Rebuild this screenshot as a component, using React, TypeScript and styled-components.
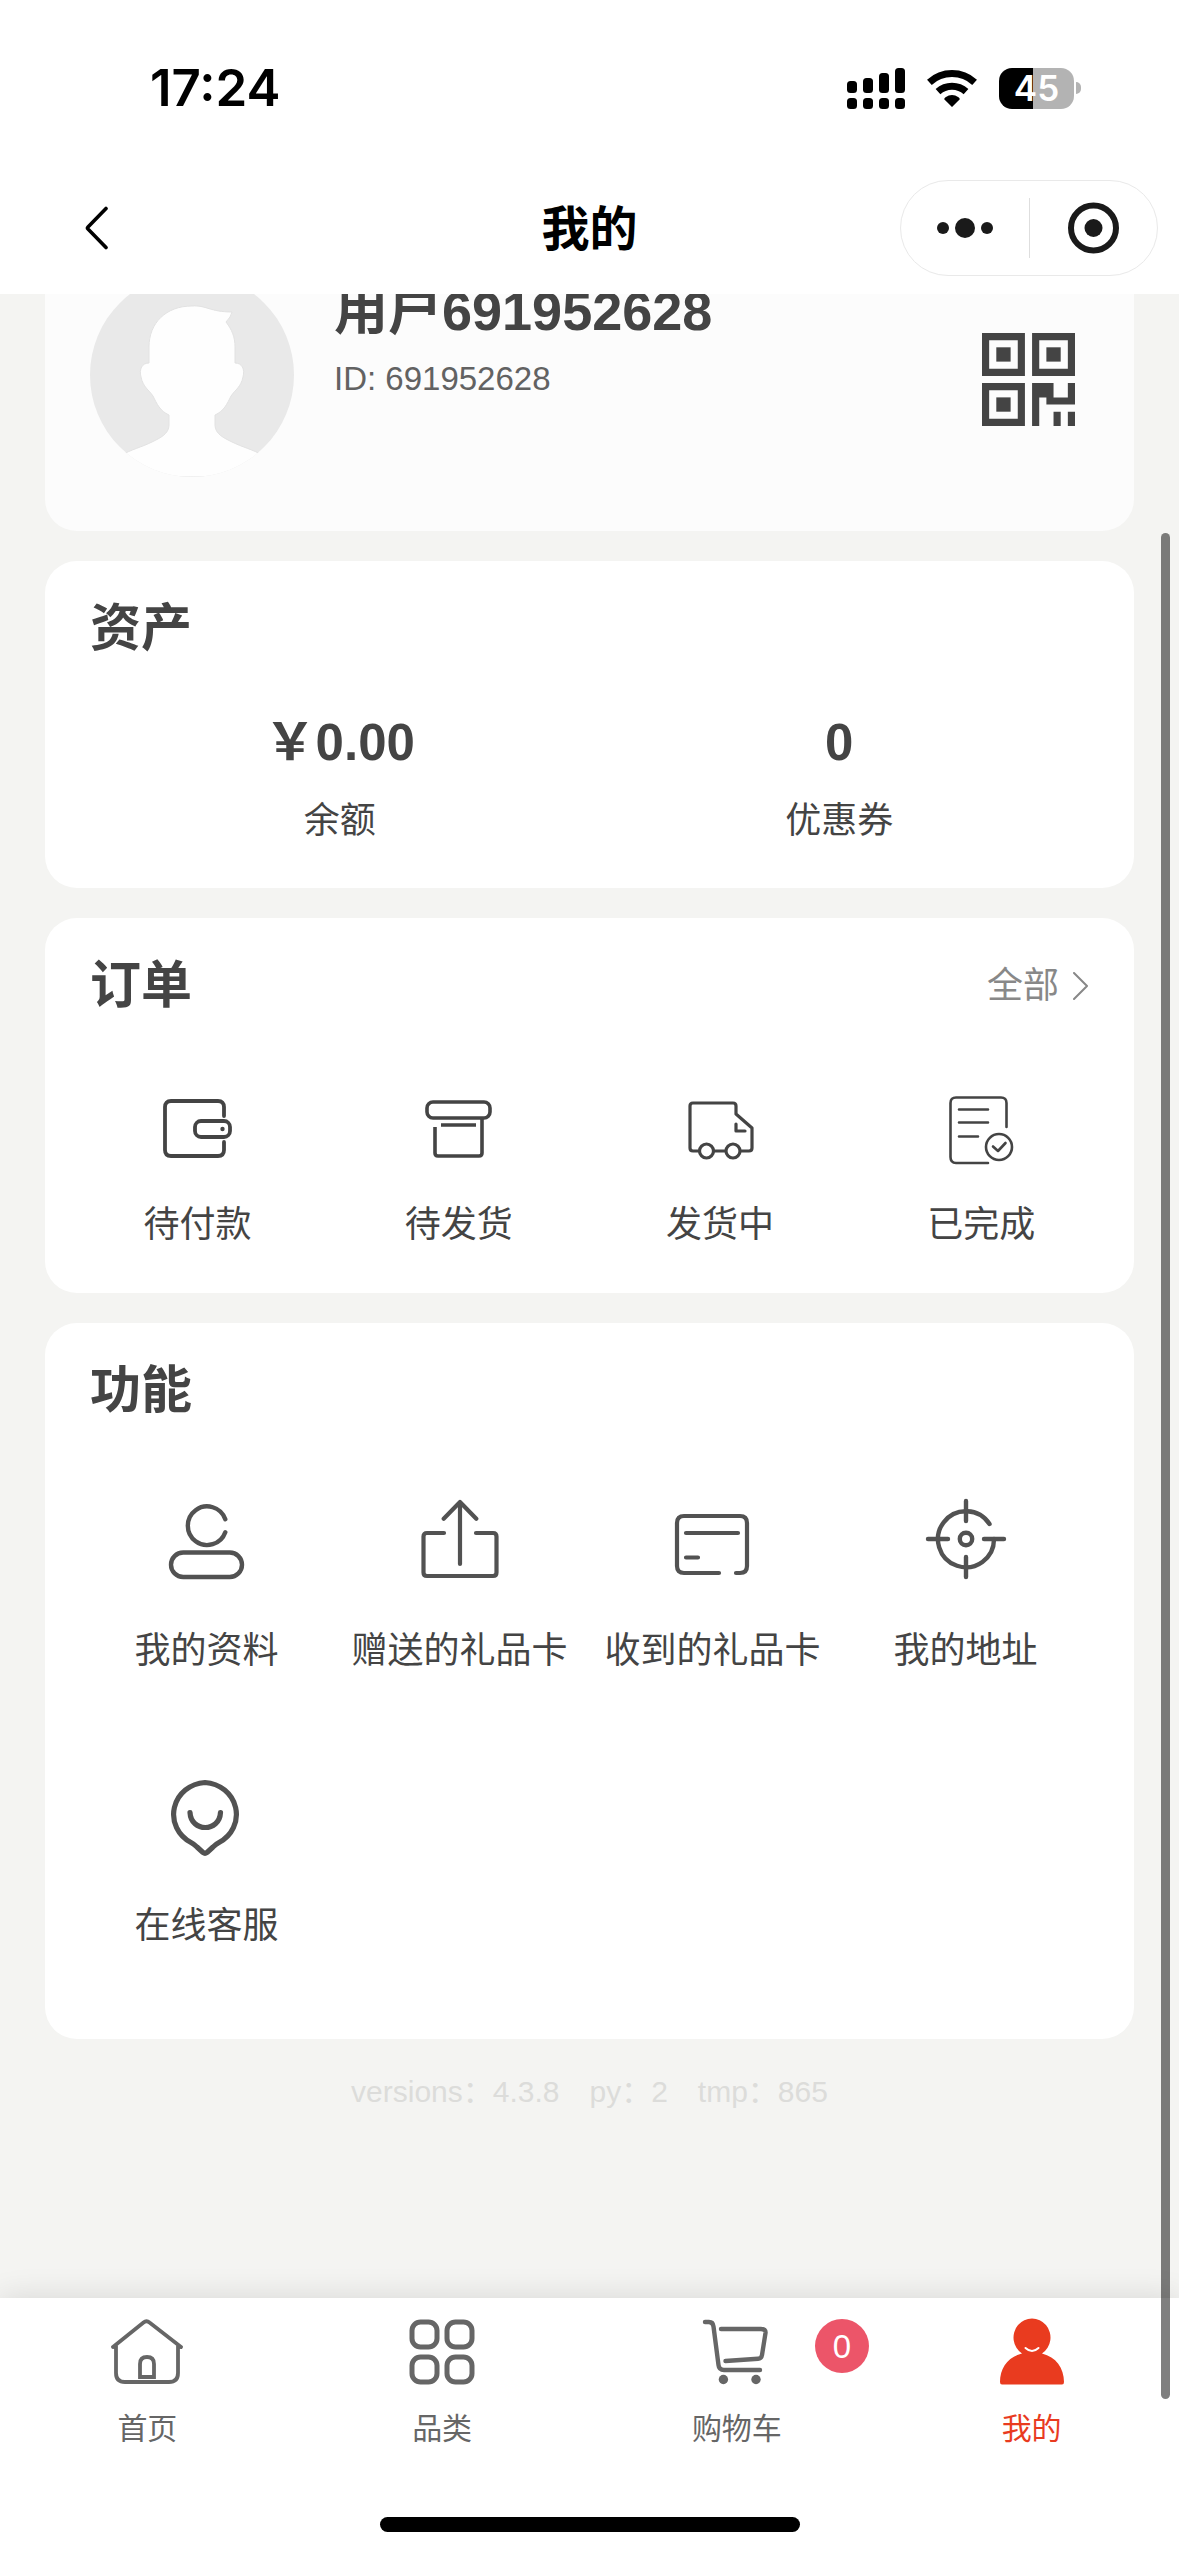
import React from "react";
import styled, { createGlobalStyle } from "styled-components";

const GlobalStyle = createGlobalStyle`
  *, *::before, *::after { box-sizing: border-box; }
  body {
    margin: 0;
    background: #f4f4f2;
    color: #444;
    font-family: "Liberation Sans", "Noto Sans CJK SC", sans-serif;
  }
  h1, h2, p { margin: 0; }
  button {
    margin: 0;
    padding: 0;
    border: 0;
    background: none;
    color: inherit;
    font: inherit;
    cursor: pointer;
  }
  a { color: inherit; text-decoration: none; }
  svg { display: block; flex: none; }
`;

const Screen = styled.div`
  display: flex;
  flex-direction: column;
  min-height: 100vh;
`;

const Header = styled.header`
  background: #fff;
  color: #000;
`;

const StatusBar = styled.div`
  display: flex;
  align-items: center;
  justify-content: space-between;
  height: 162px;
  padding: 14px 98px 0 150px;
`;

const Clock = styled.time`
  font: 600 51px/60px Inter, sans-serif;
`;

const StatusIcons = styled.div`
  display: flex;
  align-items: center;
  gap: 22px;
`;

const Battery = styled.div`
  display: flex;
  align-items: center;
  gap: 2px;
`;

const BatteryBody = styled.span<{ $level: number }>`
  width: 75px;
  height: 41px;
  border-radius: 13px;
  background: linear-gradient(to right, #000 ${(p) => p.$level}%, #b3b3b3 ${(p) => p.$level}%);
  color: #fff;
  font: 600 35px/41px Inter, sans-serif;
  text-align: center;
`;

const BatteryTip = styled.span`
  width: 5px;
  height: 12px;
  border-radius: 0 6px 6px 0;
  background: #b3b3b3;
`;

const NavBar = styled.div`
  display: grid;
  grid-template-columns: 1fr auto 1fr;
  align-items: center;
  height: 132px;
  padding: 0 21px;
`;

const BackButton = styled.button`
  justify-self: start;
  padding: 24px 40px 24px 62px;
`;

const PageTitle = styled.h1`
  padding-top: 4px;
  font-size: 48px;
  line-height: 60px;
  font-weight: 700;
`;

const Capsule = styled.div`
  justify-self: end;
  display: grid;
  grid-template-columns: 1fr 1px 1fr;
  align-items: center;
  width: 258px;
  height: 96px;
  border: 1px solid #e9e9e9;
  border-radius: 48px;
`;

const CapsuleButton = styled.button`
  display: grid;
  place-items: center;
  height: 94px;
`;

const CapsuleDivider = styled.span`
  height: 60px;
  background: #dedede;
`;

const Main = styled.main`
  flex: 1;
  overflow: hidden;
`;

/* The list is scrolled up a little, so the profile card slides under the header. */
const ScrolledContent = styled.div`
  display: flex;
  flex-direction: column;
  gap: 30px;
  margin-top: -74px;
  padding: 0 45px 32px;
`;

const Card = styled.section<{ $bottom: number }>`
  padding: 38px 0 ${(p) => p.$bottom}px;
  border-radius: 32px;
  background: #fff;
`;

const ProfileCard = styled.section`
  display: flex;
  align-items: flex-start;
  padding: 53px 59px 54px 45px;
  border-radius: 32px;
  background: #fcfcfc;
`;

const Avatar = styled.svg`
  width: 204px;
  height: 204px;
  border-radius: 50%;
  background: #e9e9e9;
`;

const ProfileInfo = styled.div`
  flex: 1;
  display: flex;
  flex-direction: column;
  gap: 16px;
  padding: 6px 0 0 40px;
`;

const UserName = styled.p`
  font-size: 54px;
  line-height: 64px;
  font-weight: 700;
`;

const UserId = styled.p`
  color: #626262;
  font-size: 33px;
  line-height: 40px;
`;

const QrButton = styled.button`
  margin-top: 60px;
`;

const CardHead = styled.div`
  display: flex;
  align-items: center;
  justify-content: space-between;
  padding: 0 45px;
`;

const CardTitle = styled.h2`
  font-size: 51px;
  line-height: 60px;
  font-weight: 700;
`;

const MoreLink = styled.a`
  display: flex;
  align-items: center;
  gap: 14px;
  color: #888;
  font-size: 36px;
  line-height: 56px;
`;

const AssetRow = styled.div`
  display: grid;
  grid-template-columns: 1fr 1fr;
  padding: 54px 45px 0;
`;

const Asset = styled.a`
  display: flex;
  flex-direction: column;
  align-items: center;
  gap: 23px;
`;

const AssetValue = styled.strong`
  font-size: 51px;
  line-height: 60px;
`;

const Label = styled.span`
  font-size: 36px;
  line-height: 50px;
  white-space: nowrap;
`;

const OrderGrid = styled.div`
  display: grid;
  grid-template-columns: repeat(4, 1fr);
  padding: 78px 22px 0;
`;

const FeatureGrid = styled.div`
  display: grid;
  grid-template-columns: repeat(4, 1fr);
  row-gap: 96px;
  padding: 76px 42px 0 35px;
`;

const Entry = styled.a<{ $gap: number }>`
  display: flex;
  flex-direction: column;
  align-items: center;
  gap: ${(p) => p.$gap}px;
`;

const LineIcon = styled.svg<{ $size: number; $color: string; $stroke: number }>`
  width: ${(p) => p.$size}px;
  height: ${(p) => p.$size}px;
  fill: none;
  stroke: ${(p) => p.$color};
  stroke-width: ${(p) => p.$stroke};
  stroke-linecap: round;
  stroke-linejoin: round;
`;

const Version = styled.p`
  display: flex;
  justify-content: center;
  gap: 30px;
  padding-top: 2px;
  color: #dcdcda;
  font-size: 30px;
  line-height: 42px;
`;

const TabBar = styled.nav`
  background: #fff;
  box-shadow: 0 0 30px rgba(0, 0, 0, 0.12);
`;

const Tabs = styled.div`
  display: grid;
  grid-template-columns: repeat(4, 1fr);
  padding-top: 18px;
`;

const Tab = styled.a<{ $active?: boolean }>`
  position: relative;
  display: flex;
  flex-direction: column;
  align-items: center;
  gap: 21px;
  color: ${(p) => (p.$active ? "#e93b1f" : "#666")};
  font-size: 30px;
  line-height: 40px;
`;

const Badge = styled.span`
  position: absolute;
  top: 3px;
  left: calc(50% + 78px);
  width: 54px;
  height: 54px;
  border-radius: 50%;
  background: #ec5569;
  color: #fff;
  font-size: 33px;
  line-height: 56px;
  text-align: center;
`;

const HomeIndicator = styled.div`
  width: 420px;
  height: 15px;
  margin: 68px auto 0;
  border-radius: 8px;
  background: #000;
`;

const TabBarFoot = styled.div`
  height: 24px;
`;

const ScrollThumb = styled.div`
  position: fixed;
  top: 533px;
  right: 9px;
  bottom: 157px;
  width: 9px;
  border-radius: 5px;
  background: rgba(0, 0, 0, 0.5);
`;

const SignalIcon = () => (
  <svg width="58" height="41" viewBox="0 0 58 41" aria-hidden="true">
    <rect x="0" y="13" width="10" height="12" rx="3.5" />
    <rect x="16" y="10" width="10" height="15" rx="3.5" />
    <rect x="32" y="5" width="10" height="20" rx="3.5" />
    <rect x="48" y="0" width="10" height="25" rx="3.5" />
    {[0, 16, 32, 48].map((x) => (
      <rect key={x} x={x} y="30" width="10" height="11" rx="3.5" />
    ))}
  </svg>
);

const WifiIcon = () => (
  <svg width="50" height="41" viewBox="0 0 50 41" aria-hidden="true">
    <path d="M2.4 14.3A33.5 33.5 0 0 1 47.6 14.3" fill="none" stroke="#000" strokeWidth="7" />
    <path d="M11 23.7A20.7 20.7 0 0 1 39 23.7" fill="none" stroke="#000" strokeWidth="7" />
    <path d="M25 39L17.2 31.2Q17.2 30 18.5 29.2A12 12 0 0 1 31.5 29.2Q32.8 30 32.8 31.2Z" />
  </svg>
);

const QrIcon = () => (
  <svg width="93" height="93" viewBox="0 0 13 13" fill="#444" aria-hidden="true">
    {[[0, 0], [7, 0], [0, 7]].map(([x, y]) => (
      <React.Fragment key={`${x}-${y}`}>
        <path fillRule="evenodd" d={`M${x} ${y}h6v6h-6zM${x + 1} ${y + 1}v4h4v-4z`} />
        <rect x={x + 2} y={y + 2} width="2" height="2" />
      </React.Fragment>
    ))}
    <path d="M7 7h3v2h2v-2h1v3h-4v-1h-1v4h-1z" />
    <path d="M10 11h1v2h-1zM12 11h1v2h-1z" />
  </svg>
);

const orders = [
  {
    label: "待付款",
    stroke: 3.8,
    icon: (
      <>
        <path d="M62 22V13Q62 7 56 7H9Q3 7 3 13V56Q3 62 9 62H56Q62 62 62 56V48" />
        <rect x="33" y="27" width="35" height="16" rx="6" />
        <circle cx="60.5" cy="35" r="2.2" fill="#444" stroke="none" />
      </>
    ),
  },
  {
    label: "待发货",
    stroke: 3.6,
    icon: (
      <>
        <rect x="4" y="8" width="63" height="16" rx="6" />
        <path d="M12 33V59Q12 62 15 62H56Q59 62 59 59V25M18 31H53" strokeLinecap="butt" />
      </>
    ),
  },
  {
    label: "发货中",
    stroke: 3.2,
    icon: (
      <>
        <path d="M15 57H9Q6 57 6 54V12Q6 9 9 9H49Q52 9 52 12V20L68 34V54Q68 57 65 57H57M30 57H41" />
        <circle cx="22.5" cy="57" r="7" />
        <circle cx="49" cy="57" r="7" />
        <path d="M52 30V37H61" />
      </>
    ),
  },
  {
    label: "已完成",
    stroke: 2.6,
    icon: (
      <>
        <path d="M61.5 33V9Q61.5 3.5 56 3.5H11Q5.5 3.5 5.5 9V63Q5.5 69 11 69H43" />
        <path d="M14 15.5H43M14 28.5H43M14 42.5H33" />
        <circle cx="54" cy="53" r="13" />
        <path d="M48 52.5L53 57L60.5 49" />
      </>
    ),
  },
];

const features = [
  {
    label: "我的资料",
    stroke: 4.4,
    icon: (
      <>
        <path d="M60.3 22.2A19.3 19.3 0 1 0 60.3 35.2" />
        <rect x="6" y="55.5" width="71" height="24.5" rx="12.2" />
      </>
    ),
  },
  {
    label: "赠送的礼品卡",
    stroke: 4.2,
    icon: (
      <>
        <path d="M26 36H9Q5.5 36 5.5 39.5V75.5Q5.5 79 9 79H75Q78.5 79 78.5 75.5V39.5Q78.5 36 75 36H58" />
        <path d="M42 67V5M25.7 21.7L42 5L58.3 21.7" />
      </>
    ),
  },
  {
    label: "收到的礼品卡",
    stroke: 4.2,
    icon: (
      <>
        <path d="M48 76H13Q6 76 6 69V26Q6 19 13 19H69Q76 19 76 26V69Q76 76 69 76H65" />
        <path d="M15 36H67M15 60.5H27" />
      </>
    ),
  },
  {
    label: "我的地址",
    stroke: 4.4,
    icon: (
      <>
        <path d="M65.5 27A28 28 0 1 0 70 42" />
        <circle cx="42" cy="42" r="6.2" />
        <path d="M4 42H24M60 42H80M42 4V24M42 60V80" />
      </>
    ),
  },
  {
    label: "在线客服",
    stroke: 5.2,
    icon: (
      <>
        <path d="M40 10.5A33.5 32 0 0 1 54 70.5Q51 72 48 75L42 80.5Q40 82 38 80.5L32 75Q29 72 26 70.5A33.5 32 0 0 1 40 10.5Z" />
        <path d="M25 40.5C26 60.5 54.500 60.5 55.5 40.5" />
      </>
    ),
  },
];

const tabs = [
  {
    label: "首页",
    stroke: 3.8,
    icon: (
      <>
        <path d="M2 31L32.5 6.5Q35.5 4 38.5 6.5L70 31M5 30V57Q5 66 14 66H58Q67 66 67 57V30" />
        <path d="M29 61V48Q29 41 36 41Q43 41 43 48V61Z" strokeLinejoin="miter" />
      </>
    ),
  },
  {
    label: "品类",
    stroke: 5,
    icon: (
      <>
        {[[6, 6], [41, 6], [6, 41], [41, 41]].map(([x, y]) => (
          <rect key={`${x}-${y}`} x={x} y={y} width="25" height="25" rx="8.5" />
        ))}
      </>
    ),
  },
  {
    label: "购物车",
    stroke: 4.4,
    badge: 0,
    icon: (
      <>
        <path d="M4 6H8Q12 6 12.5 10.5L17.5 49Q18 54 23 54H59" />
        <path d="M20 13H60Q65 13 64.5 17L61 39Q60.5 42.5 57 42.8L24.5 45" />
        <circle cx="22.4" cy="63.5" r="4.7" fill="#666" stroke="none" />
        <circle cx="55" cy="63.5" r="4.7" fill="#666" stroke="none" />
      </>
    ),
  },
  {
    label: "我的",
    stroke: 2,
    active: true,
    icon: (
      <>
        <path
          d="M26 37.5A18.5 19 0 1 1 46 37.5C60 41 68 52 68 66Q68 68.5 66 68.5H6Q4 68.5 4 66C4 52 12 41 26 37.5Z"
          fill="#e93b1f"
          stroke="none"
        />
        <path d="M29.5 32Q36 38 42.5 32" stroke="#fff" />
      </>
    ),
  },
];

export default function App() {
  return (
    <>
      <GlobalStyle />
      <Screen lang="zh-CN">
        <Header>
          <StatusBar>
            <Clock>17:24</Clock>
            <StatusIcons>
              <SignalIcon />
              <WifiIcon />
              <Battery>
                <BatteryBody $level={45}>45</BatteryBody>
                <BatteryTip />
              </Battery>
            </StatusIcons>
          </StatusBar>
          <NavBar>
            <BackButton aria-label="返回">
              <svg width="28" height="44" viewBox="0 0 28 44" fill="none" stroke="#000" strokeWidth="3.6" strokeLinecap="round" strokeLinejoin="round">
                <path d="M23 2.5L5 21Q4 22 5 23L23 41.5" />
              </svg>
            </BackButton>
            <PageTitle>我的</PageTitle>
            <Capsule>
              <CapsuleButton aria-label="更多">
                <svg width="58" height="52" viewBox="0 0 58 52" fill="#1a1a1a">
                  <circle cx="7" cy="26" r="6" />
                  <circle cx="29" cy="26" r="10" />
                  <circle cx="51" cy="26" r="6" />
                </svg>
              </CapsuleButton>
              <CapsuleDivider />
              <CapsuleButton aria-label="关闭">
                <svg width="52" height="52" viewBox="0 0 52 52">
                  <circle cx="26.5" cy="26" r="22.5" fill="none" stroke="#1a1a1a" strokeWidth="6" />
                  <circle cx="26.5" cy="26" r="9" fill="#1a1a1a" />
                </svg>
              </CapsuleButton>
            </Capsule>
          </NavBar>
        </Header>

        <Main>
          <ScrolledContent>
            <ProfileCard>
              <Avatar viewBox="0 0 204 204" role="img" aria-label="头像">
                <path
                  d="M102 33C116 32 120 39 142 39Q141 44 136 49C142 57 145 64 145 74V90C152 90 155 96 153 104C151 114 145 117 141 123C137 131 134 138 125 142V152C125 161 134 165 142 169C152 174 164 177 172 182L204 204H0L32 182C40 177 52 174 62 169C70 165 79 161 79 152V142C70 138 67 131 63 123C59 117 53 114 51 104C49 96 52 90 59 90V74C59 50 76 33 102 33Z"
                  fill="#fefefe"
                  stroke="#e2e2e2"
                  strokeWidth="1"
                />
              </Avatar>
              <ProfileInfo>
                <UserName>用户691952628</UserName>
                <UserId>ID: 691952628</UserId>
              </ProfileInfo>
              <QrButton aria-label="二维码">
                <QrIcon />
              </QrButton>
            </ProfileCard>

            <Card $bottom={42}>
              <CardHead>
                <CardTitle>资产</CardTitle>
              </CardHead>
              <AssetRow>
                <Asset href="#balance">
                  <AssetValue>￥0.00</AssetValue>
                  <Label>余额</Label>
                </Asset>
                <Asset href="#coupons">
                  <AssetValue>0</AssetValue>
                  <Label>优惠券</Label>
                </Asset>
              </AssetRow>
            </Card>

            <Card $bottom={43}>
              <CardHead>
                <CardTitle>订单</CardTitle>
                <MoreLink href="#orders">
                  全部
                  <svg width="16" height="28" viewBox="0 0 16 28" fill="none" stroke="#888" strokeWidth="2" strokeLinecap="round" strokeLinejoin="round">
                    <path d="M1 1L14 14L1 27" />
                  </svg>
                </MoreLink>
              </CardHead>
              <OrderGrid>
                {orders.map((o) => (
                  <Entry key={o.label} href="#orders" $gap={34}>
                    <LineIcon viewBox="0 0 72 72" $size={72} $color="#444" $stroke={o.stroke} aria-hidden="true">
                      {o.icon}
                    </LineIcon>
                    <Label>{o.label}</Label>
                  </Entry>
                ))}
              </OrderGrid>
            </Card>

            <Card $bottom={88}>
              <CardHead>
                <CardTitle>功能</CardTitle>
              </CardHead>
              <FeatureGrid>
                {features.map((f) => (
                  <Entry key={f.label} href="#features" $gap={45}>
                    <LineIcon viewBox="0 0 84 84" $size={84} $color="#525252" $stroke={f.stroke} aria-hidden="true">
                      {f.icon}
                    </LineIcon>
                    <Label>{f.label}</Label>
                  </Entry>
                ))}
              </FeatureGrid>
            </Card>

            <Version>
              <span>versions：4.3.8</span>
              <span>py：2</span>
              <span>tmp：865</span>
            </Version>
          </ScrolledContent>
        </Main>

        <TabBar>
          <Tabs>
            {tabs.map((t) => (
              <Tab key={t.label} href="#tab" $active={t.active} aria-current={t.active ? "page" : undefined}>
                <LineIcon viewBox="0 0 72 72" $size={72} $color="#666" $stroke={t.stroke} aria-hidden="true">
                  {t.icon}
                </LineIcon>
                {t.badge !== undefined && <Badge>{t.badge}</Badge>}
                <span>{t.label}</span>
              </Tab>
            ))}
          </Tabs>
          <HomeIndicator />
          <TabBarFoot />
        </TabBar>
        <ScrollThumb />
      </Screen>
    </>
  );
}
